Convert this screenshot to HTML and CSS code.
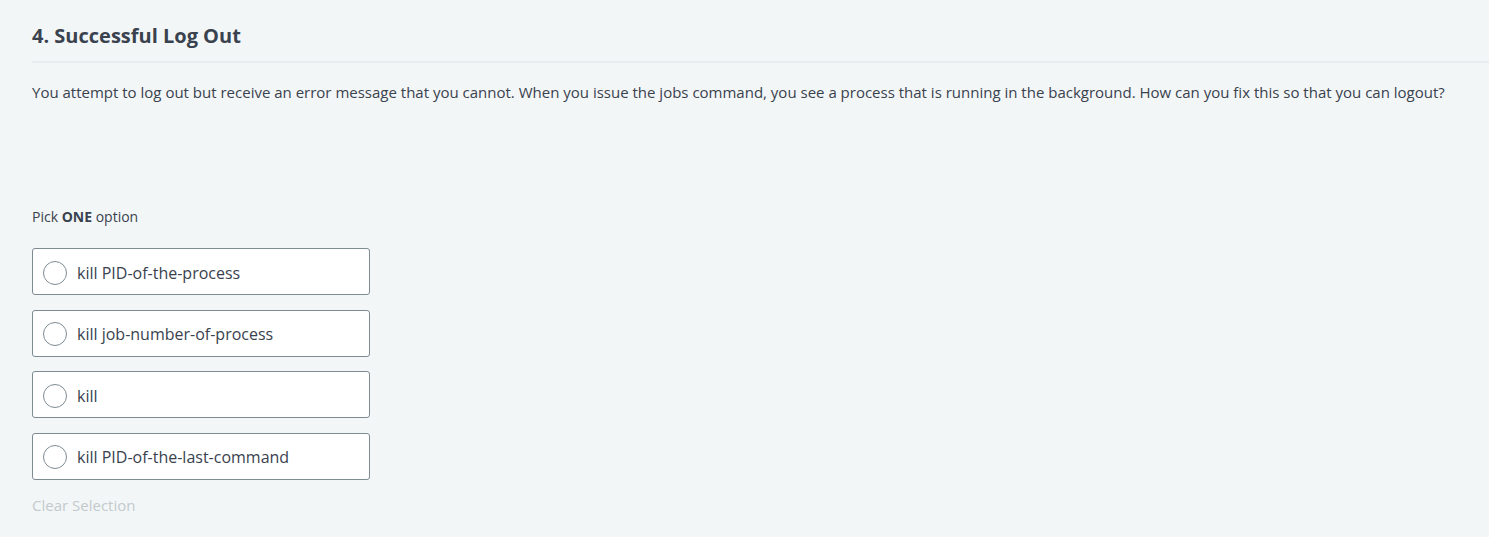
FILE: index.html
```html
<!DOCTYPE html>
<html lang="en">
<head>
<meta charset="utf-8">
<title>Successful Log Out</title>
<link rel="stylesheet" href="styles.css">
</head>
<body>
<main class="question">
  <header class="q-header">
    <h1 class="q-title">4. Successful Log Out</h1>
  </header>
  <p class="q-text">You attempt to log out but receive an error message that you cannot. When you issue the jobs command, you see a process that is running in the background. How can you fix this so that you can logout?</p>
  <div class="answers">
    <p class="pick">Pick <strong>ONE</strong> option</p>
    <div class="options">
      <label class="option"><span class="radio"></span><span class="opt-text">kill PID-of-the-process</span></label>
      <label class="option"><span class="radio"></span><span class="opt-text">kill job-number-of-process</span></label>
      <label class="option"><span class="radio"></span><span class="opt-text">kill</span></label>
      <label class="option"><span class="radio"></span><span class="opt-text">kill PID-of-the-last-command</span></label>
    </div>
    <div class="clear">Clear Selection</div>
  </div>
</main>
</body>
</html>
```
FILE: styles.css
```css
html, body {
  margin: 0;
  padding: 0;
  background: #f3f6f7;
}
body {
  font-family: "Open Sans", "Noto Sans", sans-serif;
  color: #39424e;
}
.question {
  padding: 21px 0 0 32px;
}
.q-header {
  border-bottom: 2px solid #e8ecee;
  padding-bottom: 10px;
}
.q-title {
  margin: 0;
  font-size: 20px;
  font-weight: 700;
  line-height: 30px;
  color: #39424e;
}
.q-text {
  margin: 17px 0 0;
  font-size: 15px;
  line-height: 24px;
  color: #39424e;
}
.answers {
  margin-top: 103px;
}
.pick {
  margin: 0;
  font-size: 14px;
  line-height: 20px;
  color: #39424e;
}
.options {
  margin-top: 21px;
  display: flex;
  flex-direction: column;
  gap: 14.67px;
  width: 338px;
}
.option {
  display: flex;
  align-items: center;
  height: 47px;
  box-sizing: border-box;
  border: 1px solid #7d8b93;
  border-radius: 3px;
  background: #fff;
  padding: 2px 0 0 10px;
}
.radio {
  width: 24px;
  height: 24px;
  box-sizing: border-box;
  border: 1px solid #7d8b93;
  border-radius: 50%;
  background: #fff;
  flex: none;
}
.opt-text {
  margin-left: 10px;
  font-size: 16px;
  color: #39424e;
}
.clear {
  margin-top: 14px;
  font-size: 15px;
  line-height: 22px;
  color: #c2cacd;
}
```
